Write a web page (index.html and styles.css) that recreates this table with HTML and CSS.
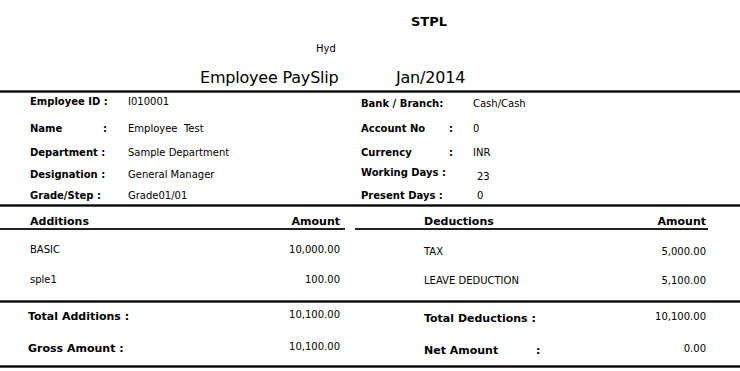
FILE: index.html
```html
<!DOCTYPE html>
<html>
<head>
<meta charset="utf-8">
<title>Employee PaySlip</title>
<link rel="stylesheet" href="styles.css">
</head>
<body>
<header class="top">
  <div class="company">STPL</div>
  <div class="city">Hyd</div>
  <div class="title"><span class="title-main">Employee PaySlip</span><span class="title-month">Jan/2014</span></div>
</header>
<div class="rule"></div>
<section class="info">
  <div class="irow r1"><span class="lbl">Employee ID :</span><span class="val">I010001</span><span class="lbl rl">Bank / Branch:</span><span class="val rv">Cash/Cash</span></div>
  <div class="irow r2"><span class="lbl"><span class="lw">Name</span>:</span><span class="val">Employee&nbsp; Test</span><span class="lbl rl"><span class="lw2">Account No</span>:</span><span class="val rv">0</span></div>
  <div class="irow r3"><span class="lbl">Department :</span><span class="val">Sample Department</span><span class="lbl rl"><span class="lw2">Currency</span>:</span><span class="val rv">INR</span></div>
  <div class="irow r4"><span class="lbl">Designation :</span><span class="val">General Manager</span><span class="lbl rl up">Working Days :</span><span class="val rv dn">23</span></div>
  <div class="irow r5"><span class="lbl">Grade/Step :</span><span class="val">Grade01/01</span><span class="lbl rl">Present Days :</span><span class="val rv sh">0</span></div>
</section>
<div class="rule"></div>
<section class="band hband">
  <div class="side left"><div class="hrow"><span>Additions</span><span>Amount</span></div></div>
  <div class="side right"><div class="hrow"><span>Deductions</span><span>Amount</span></div></div>
</section>
<section class="band items">
  <div class="side left">
    <div class="item"><span>BASIC</span><span>10,000.00</span></div>
    <div class="item"><span>sple1</span><span>100.00</span></div>
  </div>
  <div class="side right">
    <div class="item"><span>TAX</span><span>5,000.00</span></div>
    <div class="item"><span>LEAVE DEDUCTION</span><span>5,100.00</span></div>
  </div>
</section>
<div class="rule"></div>
<section class="band totals">
  <div class="side left">
    <div class="tot"><span class="tl">Total Additions :</span><span class="tv">10,100.00</span></div>
    <div class="tot"><span class="tl">Gross Amount :</span><span class="tv">10,100.00</span></div>
  </div>
  <div class="side right">
    <div class="tot"><span class="tl">Total Deductions :</span><span class="tv">10,100.00</span></div>
    <div class="tot"><span class="tl"><span class="nw">Net Amount</span>:</span><span class="tv">0.00</span></div>
  </div>
</section>
<div class="rule"></div>
</body>
</html>
```

FILE: styles.css
```css
html, body {
  margin: 0;
  padding: 0;
  background: #fff;
}
body {
  width: 740px;
  font-family: "DejaVu Sans", Verdana, sans-serif;
  color: #000;
}
.top {
  height: 90px;
  display: flex;
  flex-direction: column;
}
.company {
  margin-top: 14px;
  padding-left: 411px;
  font-weight: bold;
  font-size: 13px;
  line-height: 15px;
}
.city {
  margin-top: 13px;
  padding-left: 316px;
  font-size: 10px;
  line-height: 14px;
}
.title {
  margin-top: 12px;
  display: flex;
  font-size: 16px;
  line-height: 20px;
  letter-spacing: -0.2px;
}
.title-main {
  box-sizing: border-box;
  padding-left: 200px;
  width: 396px;
}
.rule {
  height: 1px;
  background: #000;
  border-top: 1px solid #555;
  border-bottom: 1px solid #555;
}
.info {
  height: 111px;
  box-sizing: border-box;
  padding-top: 2px;
}
.irow {
  display: grid;
  grid-template-columns: 30px 98px 233px 112px 1fr;
  font-size: 10px;
  line-height: 14px;
}
.irow > .lbl:first-child { grid-column: 2; }
.r2 { margin-top: 11px; }
.r3 { margin-top: 10px; }
.r4 { margin-top: 8px; }
.r5 { margin-top: 5px; }
.lbl {
  font-weight: bold;
  white-space: nowrap;
}
.lw { display: inline-block; width: 73px; }
.lw2 { display: inline-block; width: 88px; }
.val { white-space: nowrap; }
.r1 .rl, .r1 .rv { padding-top: 2px; }
.up { margin-top: -2px; }
.dn { padding-left: 4px; padding-top: 2px; }
.sh { padding-left: 4px; }
.band {
  display: grid;
  grid-template-columns: 350px 390px;
}
.side {
  display: flex;
  flex-direction: column;
}
.left { padding: 0 10px 0 0; }
.right { padding: 0 34px 0 74px; }
.hband { padding-top: 8px; }
.hrow {
  display: flex;
  justify-content: space-between;
  font-weight: bold;
  font-size: 11px;
  line-height: 13px;
  border-bottom: 2px solid #222;
}
.left .hrow { padding-left: 30px; margin-right: -5px; padding-right: 5px; }
.right .hrow { margin-left: -69px; padding-left: 69px; margin-right: -2px; padding-right: 2px; }
.items { height: 70px; }
.items .side { padding-top: 13px; gap: 16px; }
.items .right { padding-top: 15px; gap: 15px; }
.item {
  display: flex;
  justify-content: space-between;
  font-size: 10px;
  line-height: 14px;
}
.left .item { padding-left: 30px; }
.totals { height: 62px; }
.totals .side { padding-top: 6px; gap: 16px; }
.totals .right { padding-top: 8px; gap: 16px; }
.tot {
  display: flex;
  justify-content: space-between;
  align-items: flex-start;
}
.left .tot { padding-left: 28px; }
.tl {
  font-weight: bold;
  font-size: 11px;
  line-height: 16px;
  white-space: nowrap;
}
.tv {
  font-size: 10px;
  line-height: 12px;
}
.nw { display: inline-block; width: 112px; }
```
